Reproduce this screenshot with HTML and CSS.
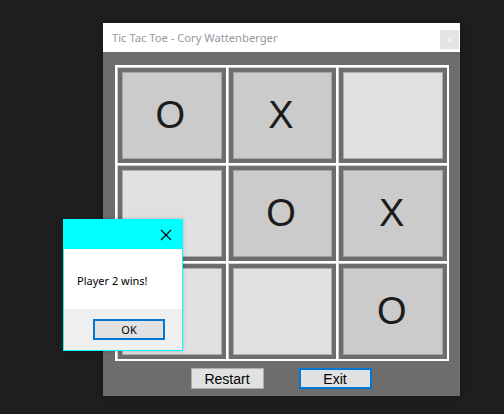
FILE: index.html
```html
<!DOCTYPE html>
<html>
<head>
<meta charset="utf-8">
<link rel="stylesheet" href="styles.css">
</head>
<body>
<div class="desktop">
  <div class="window">
    <div class="titlebar">
      <span class="title">Tic Tac Toe - Cory Wattenberger</span>
      <span class="closebox">x</span>
    </div>
    <div class="client">
      <div class="board">
        <div class="cell"><div class="btn played">O</div></div>
        <div class="cell"><div class="btn played">X</div></div>
        <div class="cell"><div class="btn"></div></div>
        <div class="cell"><div class="btn"></div></div>
        <div class="cell"><div class="btn played">O</div></div>
        <div class="cell"><div class="btn played">X</div></div>
        <div class="cell"><div class="btn"></div></div>
        <div class="cell"><div class="btn"></div></div>
        <div class="cell"><div class="btn played">O</div></div>
      </div>
      <div class="actions">
        <div class="pbtn">Restart</div>
        <div class="pbtn focused">Exit</div>
      </div>
    </div>
  </div>

  <div class="dialog">
    <div class="dlg-title">
      <svg class="dlg-x" width="12" height="12" viewBox="0 0 12 12">
        <path d="M1 1 L11 11 M11 1 L1 11" stroke="#000" stroke-width="1.1" fill="none"/>
      </svg>
    </div>
    <div class="dlg-body">Player 2 wins!</div>
    <div class="dlg-foot">
      <div class="okbtn">OK</div>
    </div>
  </div>
</div>
</body>
</html>
```

FILE: styles.css
```css
html, body {
  margin: 0;
  padding: 0;
  background: #1e1e1e;
}

.desktop {
  position: relative;
  width: 504px;
  height: 414px;
  overflow: hidden;
  background: #1e1e1e;
  font-family: "Noto Sans", "Open Sans", sans-serif;
}

.window {
  position: absolute;
  left: 103px;
  top: 23px;
  width: 357px;
  height: 373px;
  display: flex;
  flex-direction: column;
  box-shadow: 0 0 6px rgba(0, 0, 0, 0.35);
}

.titlebar {
  height: 29px;
  background: #ffffff;
  display: flex;
  align-items: center;
  justify-content: space-between;
  padding-left: 9px;
  padding-right: 1px;
}

.title {
  font-size: 11.2px;
  color: #9797a0;
  margin-top: -1px;
}

.closebox {
  width: 19px;
  height: 19px;
  background: #e4e4e4;
  color: #f6f6f6;
  font-size: 11px;
  line-height: 18px;
  text-align: center;
  font-family: "Liberation Sans", sans-serif;
  font-weight: bold;
  align-self: flex-start;
  margin-top: 7px;
}

.client {
  flex: 1;
  background: #6d6d6d;
  padding: 13px 11px 0 12px;
  display: flex;
  flex-direction: column;
}

.board {
  width: 334px;
  height: 296px;
  box-sizing: border-box;
  background: #ffffff;
  padding: 2px;
  display: grid;
  grid-template-columns: repeat(3, 1fr);
  grid-template-rows: repeat(3, 1fr);
  gap: 2px;
}

.cell {
  background: #6d6d6d;
  padding: 4px;
  border-top: 1px solid #cfcfcf;
  border-left: 1px solid #cfcfcf;
  display: flex;
}

.btn {
  flex: 1;
  background: #e0e0e0;
  border: 1px solid #acacac;
  display: flex;
  align-items: center;
  justify-content: center;
  padding-right: 3px;
  font-family: "Liberation Sans", Arial, sans-serif;
  font-size: 38px;
  color: #1c1c1c;
}

.btn.played {
  background: #cbcbcb;
  border-color: #a3a3a3;
}

.actions {
  display: flex;
  justify-content: center;
  gap: 35px;
  margin-top: 7px;
  padding-right: 2px;
}

.pbtn {
  width: 73px;
  height: 21px;
  box-sizing: border-box;
  background: #e1e1e1;
  border: 1px solid #adadad;
  font-family: "Liberation Sans", Arial, sans-serif;
  font-size: 14px;
  color: #000;
  display: flex;
  align-items: center;
  justify-content: center;
}

.pbtn.focused {
  border: 2px solid #0078d7;
}

.dialog {
  position: absolute;
  left: 63px;
  top: 219px;
  width: 120px;
  height: 132px;
  box-sizing: border-box;
  border: 1px solid #00ffff;
  display: flex;
  flex-direction: column;
  box-shadow: 0 0 4px rgba(0, 0, 0, 0.2);
}

.dlg-title {
  height: 29px;
  background: #00ffff;
  display: flex;
  align-items: center;
  justify-content: flex-end;
  padding-right: 10px;
}

.dlg-x {
  display: block;
}

.dlg-body {
  height: 60px;
  background: #ffffff;
  display: flex;
  align-items: center;
  padding-left: 13px;
  font-size: 11px;
  color: #000;
  padding-top: 2px;
  box-sizing: border-box;
}

.dlg-foot {
  flex: 1;
  background: #f0f0f0;
  display: flex;
  justify-content: flex-end;
  align-items: flex-start;
  padding-top: 10px;
  padding-right: 17px;
}

.okbtn {
  width: 72px;
  height: 21px;
  box-sizing: border-box;
  background: #e1e1e1;
  border: 2px solid #0078d7;
  font-size: 11px;
  color: #000;
  display: flex;
  align-items: center;
  justify-content: center;
}
```
